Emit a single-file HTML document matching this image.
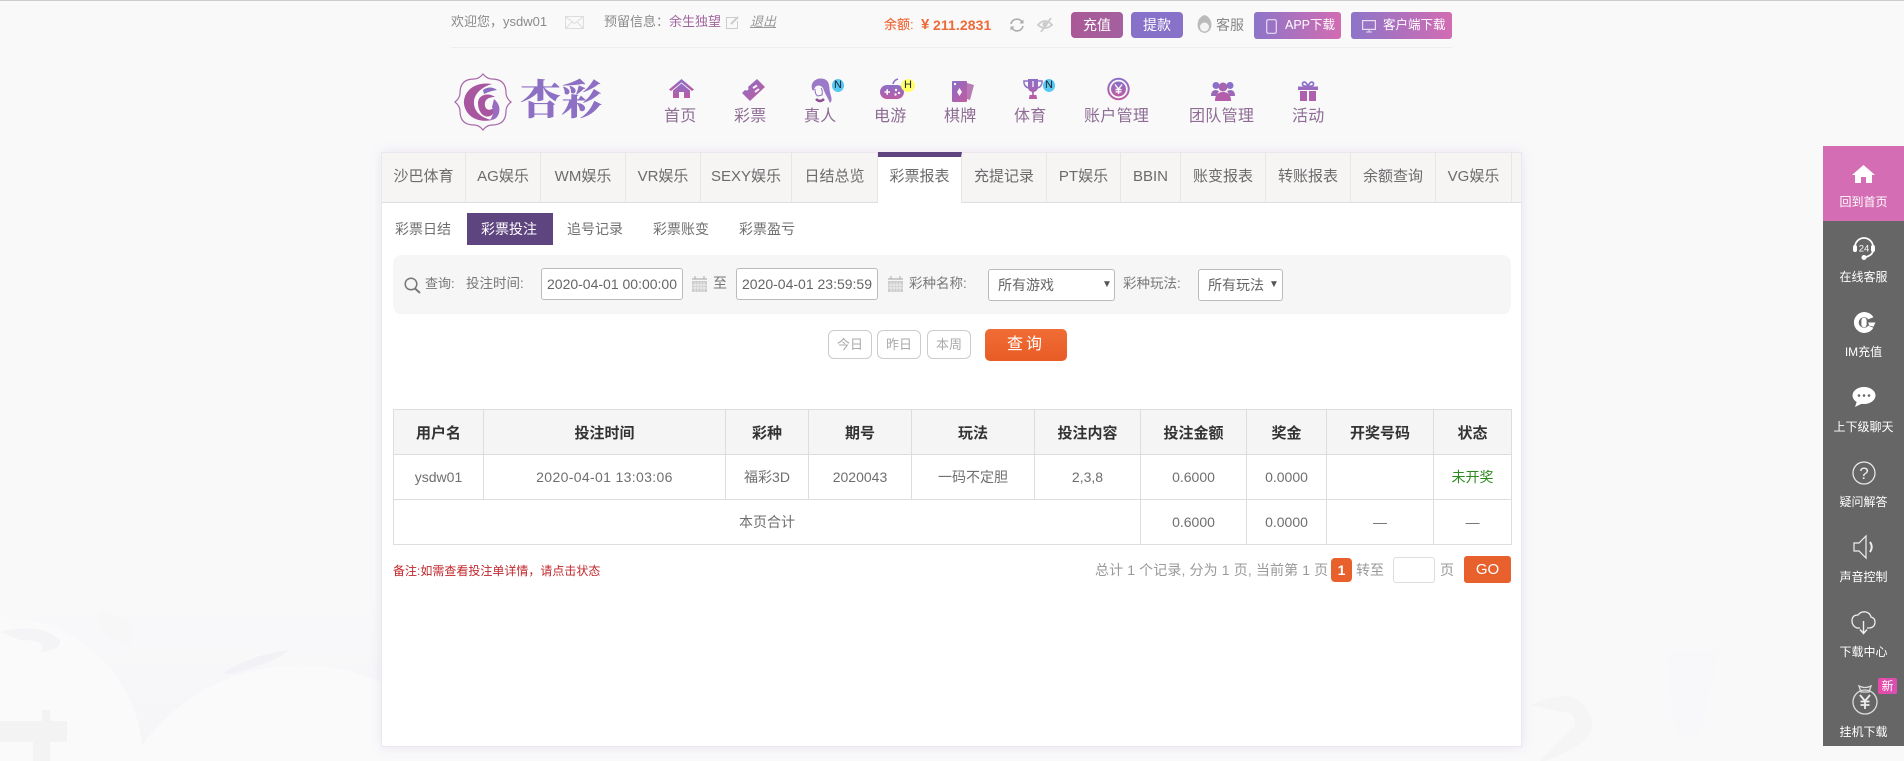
<!DOCTYPE html>
<html lang="zh-CN"><head><meta charset="utf-8"><title>彩票投注</title>
<style>
*{box-sizing:border-box}
html,body{margin:0;padding:0;width:1904px;height:761px;overflow:hidden;background:#f9f9fa}
body{position:relative;font-family:"Liberation Sans","Noto Sans CJK SC",sans-serif;color:#666}
.t{position:absolute;white-space:nowrap;line-height:20px;font-size:13px}
.a{position:absolute}
svg{position:absolute;overflow:visible}
.tab{position:absolute;top:152px;height:50px;line-height:50px;font-size:15px;text-align:center;color:#6b6b6b;border-right:1px solid #e9e5e5;white-space:nowrap}
.sub{position:absolute;top:219px;font-size:14px;line-height:20px;color:#6f6f6f;white-space:nowrap}
.nav{position:absolute;top:106px;font-size:16px;line-height:22px;color:#8e6c94;white-space:nowrap;letter-spacing:.3px}
.inp{position:absolute;top:268px;height:32px;width:142px;background:#fff;border:1px solid #bbb;border-radius:3px;font-size:14px;line-height:30px;padding-left:5px;color:#666;white-space:nowrap}
.dbtn{position:absolute;top:330px;height:29px;width:44px;border:1px solid #ccc;border-radius:6px;background:#fff;color:#aaa;font-size:13px;line-height:27px;text-align:center}
table{position:absolute;left:393px;top:409px;width:1118px;border-collapse:collapse;table-layout:fixed}
td,th{border:1px solid #ddd;height:45px;padding:0;text-align:center;font-size:14px;color:#6f6f6f;font-weight:400}
th{background:#f5f5f5;color:#333;font-weight:700;font-size:15px}
.side{position:absolute;left:1823px;width:81px;height:75px;background:#666}
.side span{position:absolute;left:0;width:81px;text-align:center;color:#fff;font-size:12px;line-height:18px;white-space:nowrap}
.badge{position:absolute;border-radius:50%;font-size:11px;line-height:13px;text-align:center;color:#223}
.hbtn{position:absolute;top:12px;color:#fff;text-align:center;border-radius:4px;font-size:14px;line-height:26px}
.dl{position:absolute;top:12px;height:27px;border-radius:3px;background:linear-gradient(90deg,#8d75c8,#d26cb2);color:#fff;font-size:12.500px;line-height:27px;white-space:nowrap}
</style></head><body>
<svg width="0" height="0" style="left:0;top:0"><defs>
<linearGradient id="g" x1="0" y1="0" x2="0" y2="1"><stop offset="0" stop-color="#8a70c8"/><stop offset="1" stop-color="#bd5ba2"/></linearGradient>
<linearGradient id="l" x1="0" y1="0" x2="1" y2="1"><stop offset="0" stop-color="#8a6dc6"/><stop offset="1" stop-color="#c35c9f"/></linearGradient>
<linearGradient id="bgf" x1="0" y1="0" x2="0" y2="1"><stop offset="0" stop-color="#f9f9fa"/><stop offset="1" stop-color="#f5f5f8"/></linearGradient>
</defs></svg>

<!-- background watermarks -->
<svg width="1904" height="761" style="left:0;top:0;overflow:hidden">
<rect x="0" y="600" width="380" height="161" fill="url(#bgf)"/>
<path d="M0 617A143 143 0 0 1 143 761L0 761Z" fill="#fafafb"/>
<path d="M132 761A195 195 0 0 1 380 682L380 761Z" fill="#fafafb"/>
<path d="M0 632 Q40 622 60 640 Q62 650 40 652 Q50 640 20 640 Z" fill="#f4f4f7"/>
<path d="M225 672 Q250 655 290 650 Q270 665 225 675 Z" fill="#f2f2f6"/>
<path d="M100 610 Q95 640 130 645 Q140 630 125 620 Z" fill="#f7f7f8"/>
<path d="M0 721H42V710H50V721H67V742H50V761H33V742H0Z" fill="#f3f3f4"/>
<path d="M1530 705Q1565 690 1578 700Q1610 730 1570 750Q1555 758 1545 761L1540 761L1575 725Q1575 710 1560 712Z" fill="#f5f5f6"/>
<path d="M1665 650H1720L1700 735H1675Z" fill="#f8f8fa"/>
</svg>
<div class="a" style="left:0;top:0;width:1904px;height:1px;background:#ccc"></div>

<!-- top bar -->
<div class="t" style="left:451px;top:12px;color:#8a8a8a">欢迎您，ysdw01</div>
<svg style="left:565px;top:16px" width="19" height="13"><rect x=".5" y=".5" width="18" height="12" fill="none" stroke="#ddd"/><path d="M1 1l8.500 6.500L18 1M1 12l6-6M18 12l-6-6" fill="none" stroke="#ddd"/></svg>
<div class="t" style="left:604px;top:12px;color:#8a8a8a">预留信息：</div>
<div class="t" style="left:669px;top:12px;color:#a2669f">余生独望</div>
<svg style="left:726px;top:16px" width="13" height="13"><path d="M10 1.500H.5V12.500H11.500V5" fill="none" stroke="#ccc"/><path d="M5 8L12 1" stroke="#ccc" stroke-width="2"/></svg>
<div class="t" style="left:750px;top:12px;color:#999;font-style:italic;text-decoration:underline">退出</div>
<div class="t" style="left:884px;top:15px;color:#ee6d3b;font-size:13px;font-weight:500">余额:</div>
<div class="t" style="left:921px;top:15px;color:#ee6a38;font-size:15px;font-weight:700">¥</div>
<div class="t" style="left:933px;top:15px;color:#ee6a38;font-size:14px;font-weight:700;letter-spacing:.1px">211.2831</div>
<svg style="left:1009px;top:18px" width="16" height="14" viewBox="0 0 16 14"><path d="M2 6A6 6 0 0 1 13 4M14 8A6 6 0 0 1 3 10" fill="none" stroke="#aaa" stroke-width="1.600"/><path d="M14.500 1.500V5.500H10.500zM1.500 12.500V8.500H5.500z" fill="#aaa"/></svg>
<svg style="left:1037px;top:18px" width="17" height="14" viewBox="0 0 17 14"><path d="M1 7Q8 -1 15 7Q8 13 1 7Z" fill="none" stroke="#ccc" stroke-width="1.800"/><circle cx="8" cy="6.500" r="2.500" fill="#ccc"/><path d="M14 0L4 14" stroke="#ccc" stroke-width="1.800"/></svg>
<div class="hbtn" style="left:1071px;width:52px;background:linear-gradient(90deg,#a95a96,#a4609f)">充值</div>
<div class="hbtn" style="left:1131px;width:52px;background:#8871c9">提款</div>
<svg style="left:1197px;top:15px" width="15" height="18" viewBox="0 0 15 18"><path d="M7.500 0Q14 2 14.500 10Q14 17 7.500 18Q1 17 .5 10Q1 2 7.500 0Z" fill="#bbb"/><circle cx="7.500" cy="12" r="4.500" fill="#f4f4f4"/></svg>
<div class="t" style="left:1216px;top:15px;color:#888;font-size:14px">客服</div>
<div class="dl" style="left:1254px;width:87px"><span style="position:absolute;left:31px">APP下载</span></div>
<svg style="left:1266px;top:19px" width="11" height="15"><rect x=".7" y=".7" width="9.600" height="13.600" rx="1.500" fill="none" stroke="#e8dcf3" stroke-width="1.200"/></svg>
<div class="dl" style="left:1351px;width:101px"><span style="position:absolute;left:32px">客户端下载</span></div>
<svg style="left:1362px;top:20px" width="14" height="13"><rect x=".6" y=".6" width="12.800" height="8.800" fill="none" stroke="#e8dcf3" stroke-width="1.200"/><path d="M4 12H10M7 10V12" stroke="#e8dcf3"/></svg>
<div class="a" style="left:451px;top:47px;width:1001px;height:1px;background:#eee"></div>

<!-- logo -->
<svg style="left:454px;top:73px" width="58" height="58" viewBox="0 0 58 58">
<path d="M29 1Q33 6 38 6Q52 6 52 20Q52 25 57 29Q52 33 52 38Q52 52 38 52Q33 52 29 57Q25 52 20 52Q6 52 6 38Q6 33 1 29Q6 25 6 20Q6 6 20 6Q25 6 29 1Z" fill="none" stroke="#a868a8" stroke-width="1.200"/>
<path d="M38 11C20 8 9 19 10 31C12 44 24 50 38 47C27 45 19 38 20 28C21 20 28 14 38 11Z" fill="#a8569f"/>
<path d="M29 17Q36 12 43 17Q36 18 30 21Z" fill="#8a6cc0"/>
<path d="M24 30C24 22 34 19 41 24C34 24 30 27 31 33C32 38 38 38 41 33C42 42 34 46 29 42C26 40 24 35 24 30Z" fill="#a8569f"/>
<path d="M40 26Q47 32 45 40Q43 47 36 47Q41 40 38 34Z" fill="#9a6cc0"/>
</svg>
<div class="t" style="left:520px;top:80px;font-size:41px;line-height:40px;font-family:'Liberation Serif','Noto Serif CJK SC',serif;font-weight:900;color:#8d70c4">杏彩</div>

<!-- nav -->
<svg style="left:669px;top:79px" width="25" height="19" viewBox="0 0 25 19"><path d="M12.500 0L25 10.500L23 12L12.500 3.500L2 12L0 10.500Z" fill="url(#g)"/><path d="M4 11.500L12.500 4.500L21 11.500V19H15V13H10V19H4Z" fill="url(#g)"/></svg>
<div class="nav" style="left:664px">首页</div>
<svg style="left:742px;top:79px" width="23" height="22" viewBox="0 0 23 22"><path d="M15 0L23 8L8 22L0 14L3 11Q5 12 6 11Q7 9 6 8Z" fill="url(#l)"/><path d="M11 9L15 6.500M13 13L17 10" stroke="#f9f9fa" stroke-width="2"/></svg>
<div class="nav" style="left:734px">彩票</div>
<svg style="left:809px;top:78px" width="24" height="26" viewBox="0 0 24 26"><path d="M3 11C1 3 9 -1 15 1C21 3 20 9 21 14C22 19 24 22 21 25C19 20 16 16 14 10C11 6 6 7 5 12C4 13 3 12 3 11Z" fill="#9a7ac8"/><path d="M6 11Q6 17 9 18L13 17Q14 13 12 10" fill="none" stroke="#8a6cb8"/><path d="M7 21Q11 25 15 21" stroke="#8a4d90" stroke-width="2.500" fill="none"/></svg>
<div class="badge" style="left:832px;top:79px;width:12px;height:13px;background:#55c8f2">N</div>
<div class="nav" style="left:804px">真人</div>
<svg style="left:880px;top:78px" width="24" height="22" viewBox="0 0 24 22"><path d="M13 6Q14 2 18 1" stroke="#8a70c8" stroke-width="1.500" fill="none"/><rect x="0" y="7" width="24" height="14" rx="7" fill="url(#g)"/><path d="M4.500 14H10M7.200 11.200V16.800" stroke="#f9f9fa" stroke-width="1.600"/><circle cx="16" cy="12" r="1.200" fill="#f9f9fa"/><circle cx="19" cy="15" r="1.200" fill="#f9f9fa"/><circle cx="15.500" cy="16.500" r="1.200" fill="#f9f9fa"/></svg>
<div class="badge" style="left:901px;top:79px;width:14px;height:13px;background:#ffff66">H</div>
<div class="nav" style="left:874px">电游</div>
<svg style="left:952px;top:81px" width="22" height="21" viewBox="0 0 22 21"><path d="M15 2L22 4L18 19L15 18Z" fill="#b77cb5"/><rect x="0" y="0" width="15" height="21" rx="1" fill="url(#l)"/><path d="M7.500 7L10 11L7.500 15L5 11Z" fill="#f9f9fa"/><circle cx="3" cy="3" r="1.200" fill="#f9f9fa"/></svg>
<div class="nav" style="left:944px">棋牌</div>
<svg style="left:1023px;top:79px" width="20" height="20" viewBox="0 0 24 20" preserveAspectRatio="none"><path d="M6 0H18V8Q18 12 13 13V16H16L17 20H7L8 16H11V13Q6 12 6 8Z" fill="url(#g)"/><path d="M6 2H1Q1 8 7 9M18 2H23Q23 8 17 9" fill="none" stroke="#8a70c8" stroke-width="1.600"/><path d="M12 2V8" stroke="#f9f9fa" stroke-width="1.500"/></svg>
<div class="badge" style="left:1043px;top:79px;width:12px;height:13px;background:#55c8f2">N</div>
<div class="nav" style="left:1014px">体育</div>
<svg style="left:1107px;top:78px" width="23" height="22" viewBox="0 0 23 22"><circle cx="11.500" cy="11" r="10.200" fill="none" stroke="url(#g)" stroke-width="2"/><circle cx="11.500" cy="11" r="7.500" fill="url(#g)"/><path d="M8 6.500L11.500 11L15 6.500M11.500 11V16M8.500 11.500H14.500M8.500 13.800H14.500" fill="none" stroke="#f9f9fa" stroke-width="1.400"/></svg>
<div class="nav" style="left:1084px">账户管理</div>
<svg style="left:1211px;top:81px" width="24" height="20" viewBox="0 0 24 20"><circle cx="5" cy="4.500" r="3.500" fill="#8a70c8"/><circle cx="19" cy="4.500" r="3.500" fill="#8a70c8"/><path d="M0 15Q0 9 5 9L8 10L5 15ZM24 15Q24 9 19 9L16 10L19 15Z" fill="#9b68b8"/><circle cx="12" cy="6" r="4.500" fill="#a565b0"/><path d="M4 20Q4 11 12 11Q20 11 20 20Z" fill="#b35dab"/></svg>
<div class="nav" style="left:1189px">团队管理</div>
<svg style="left:1298px;top:81px" width="20" height="20" viewBox="0 0 20 20"><path d="M10 5Q4 6 4.500 2Q7 -1 10 5Q13 -1 15.500 2Q16 6 10 5" fill="none" stroke="#8a70c8" stroke-width="1.600"/><rect x="0" y="5.500" width="20" height="3.500" fill="#9a6bc0"/><rect x="2" y="10" width="7" height="10" fill="#ae5fad"/><rect x="11" y="10" width="7" height="10" fill="#ae5fad"/></svg>
<div class="nav" style="left:1292px">活动</div>

<!-- main container -->
<div class="a" style="left:381px;top:152px;width:1141px;height:595px;background:#fff;border:1px solid #ece6ef;box-shadow:0 0 12px rgba(150,110,180,.14)"></div>
<div class="a" style="left:382px;top:153px;width:1139px;height:50px;background:#f7f4f4;border-bottom:1px solid #ddd"></div>
<div class="tab" style="left:382px;width:84px">沙巴体育</div>
<div class="tab" style="left:466px;width:75px">AG娱乐</div>
<div class="tab" style="left:541px;width:85px">WM娱乐</div>
<div class="tab" style="left:626px;width:75px">VR娱乐</div>
<div class="tab" style="left:701px;width:91px">SEXY娱乐</div>
<div class="tab" style="left:792px;width:86px">日结总览</div>
<div class="tab" style="left:878px;width:84px;background:#fff;height:51px;line-height:40px;border-top:5px solid #5f4580;border-right:1px solid #e9e5e5">彩票报表</div>
<div class="tab" style="left:962px;width:85px">充提记录</div>
<div class="tab" style="left:1047px;width:74px">PT娱乐</div>
<div class="tab" style="left:1121px;width:60px">BBIN</div>
<div class="tab" style="left:1181px;width:85px">账变报表</div>
<div class="tab" style="left:1266px;width:85px">转账报表</div>
<div class="tab" style="left:1351px;width:85px">余额查询</div>
<div class="tab" style="left:1436px;width:76px">VG娱乐</div>

<!-- sub tabs -->
<div class="a" style="left:467px;top:213px;width:86px;height:32px;background:#5f4580"></div>
<div class="sub" style="left:395px">彩票日结</div>
<div class="sub" style="left:481px;color:#fff">彩票投注</div>
<div class="sub" style="left:567px">追号记录</div>
<div class="sub" style="left:653px">彩票账变</div>
<div class="sub" style="left:739px">彩票盈亏</div>

<!-- query bar -->
<div class="a" style="left:393px;top:255px;width:1118px;height:59px;background:#f6f6f7;border-radius:8px"></div>
<svg style="left:404px;top:277px" width="17" height="17"><circle cx="7" cy="7" r="5.800" fill="none" stroke="#777" stroke-width="1.500"/><path d="M11 11.500L16 16" stroke="#777" stroke-width="2"/></svg>
<div class="t" style="left:425px;top:274px;color:#777">查询:</div>
<div class="t" style="left:466px;top:274px;color:#777;font-size:13.500px">投注时间:</div>
<div class="inp" style="left:541px">2020-04-01 00:00:00</div>
<svg style="left:692px;top:276px" width="15" height="16"><rect y="2" width="15" height="14" fill="#ccc"/><rect x="0" y="4" width="15" height="1" fill="#f6f6f7"/><path d="M3 6V16M6 6V16M9 6V16M12 6V16M0 9H15M0 12H15" stroke="#f6f6f7" stroke-width=".7"/><path d="M3 0V3M12 0V3" stroke="#aaa"/></svg>
<div class="t" style="left:713px;top:273px;font-size:14px;color:#777">至</div>
<div class="inp" style="left:736px">2020-04-01 23:59:59</div>
<svg style="left:888px;top:276px" width="15" height="16"><rect y="2" width="15" height="14" fill="#ccc"/><rect x="0" y="4" width="15" height="1" fill="#f6f6f7"/><path d="M3 6V16M6 6V16M9 6V16M12 6V16M0 9H15M0 12H15" stroke="#f6f6f7" stroke-width=".7"/><path d="M3 0V3M12 0V3" stroke="#aaa"/></svg>
<div class="t" style="left:909px;top:274px;color:#777;font-size:13.500px">彩种名称:</div>
<div class="inp" style="left:988px;top:269px;width:127px;padding-left:9px">所有游戏<span style="position:absolute;left:113px;top:0;font-size:10px;color:#555">▼</span></div>
<div class="t" style="left:1123px;top:274px;color:#777;font-size:13.500px">彩种玩法:</div>
<div class="inp" style="left:1198px;top:269px;width:85px;padding-left:9px">所有玩法<span style="position:absolute;left:70px;top:0;font-size:10px;color:#555">▼</span></div>

<!-- date buttons -->
<div class="dbtn" style="left:828px">今日</div>
<div class="dbtn" style="left:877px">昨日</div>
<div class="dbtn" style="left:927px">本周</div>
<div class="a" style="left:985px;top:329px;width:82px;height:32px;border-radius:5px;background:linear-gradient(#f06d35,#e85c26);color:#fff;font-size:16px;line-height:32px;text-align:center;letter-spacing:3px">查询</div>

<!-- table -->
<table>
<colgroup><col style="width:90px"><col style="width:242px"><col style="width:83px"><col style="width:103px"><col style="width:123px"><col style="width:106px"><col style="width:106px"><col style="width:80px"><col style="width:107px"><col style="width:78px"></colgroup>
<tr><th>用户名</th><th>投注时间</th><th>彩种</th><th>期号</th><th>玩法</th><th>投注内容</th><th>投注金额</th><th>奖金</th><th>开奖号码</th><th>状态</th></tr>
<tr><td>ysdw01</td><td style="letter-spacing:.35px">2020-04-01 13:03:06</td><td>福彩3D</td><td>2020043</td><td>一码不定胆</td><td>2,3,8</td><td>0.6000</td><td>0.0000</td><td></td><td style="color:#2b8a1e">未开奖</td></tr>
<tr><td colspan="6">本页合计</td><td>0.6000</td><td>0.0000</td><td>—</td><td>—</td></tr>
</table>

<!-- footer -->
<div class="t" style="left:393px;top:561px;font-size:12px;color:#c1272d">备注:如需查看投注单详情，请点击状态</div>
<div class="t" style="left:1095px;top:560px;font-size:14px;color:#999;letter-spacing:.12px">总计 1 个记录, 分为 1 页, 当前第 1 页</div>
<div class="a" style="left:1331px;top:558px;width:21px;height:24px;background:#e8602c;border-radius:4px;color:#fff;font-weight:700;font-size:14px;line-height:24px;text-align:center">1</div>
<div class="t" style="left:1356px;top:560px;font-size:14px;color:#999">转至</div>
<div class="a" style="left:1393px;top:557px;width:42px;height:26px;border:1px solid #ddd;border-radius:3px;background:#fff"></div>
<div class="t" style="left:1440px;top:560px;font-size:14px;color:#999">页</div>
<div class="a" style="left:1464px;top:556px;width:47px;height:27px;background:#e8602c;border-radius:3px;color:#fff;font-size:15px;line-height:27px;text-align:center">GO</div>

<!-- sidebar -->
<div class="side" style="top:146px;background:#d46db4"><span style="top:47px">回到首页</span>
<svg style="left:29px;top:19px" width="23" height="18" viewBox="0 0 23 18"><path d="M11.500 0L23 10H20V18H14V12H9V18H3V10H0Z" fill="#fff"/></svg></div>
<div class="side" style="top:221px"><span style="top:47px">在线客服</span>
<svg style="left:29px;top:15px" width="24" height="25" viewBox="0 0 24 25"><path d="M3 11A9 9 0 0 1 21 11V14Q21 19 14 21" fill="none" stroke="#fff" stroke-width="1.700"/><rect x="1" y="9" width="4" height="7" rx="2" fill="#fff"/><rect x="19" y="9" width="4" height="7" rx="2" fill="#fff"/><circle cx="12" cy="21.500" r="2.500" fill="#fff"/><text x="12" y="15.500" font-size="9.500" fill="#fff" text-anchor="middle" font-family="Liberation Sans">24</text></svg></div>
<div class="side" style="top:296px"><span style="top:47px">IM充值</span>
<svg style="left:29px;top:15px" width="24" height="23" viewBox="0 0 22 22"><path d="M20 6A10 10 0 1 0 20 16L15 14A5 5 0 1 1 15 8Z" fill="#fff"/><rect x="8.500" y="6.500" width="5" height="9" rx="2.500" fill="#fff"/><path d="M15 11H22L20 15L16 14Z" fill="#fff"/></svg></div>
<div class="side" style="top:371px"><span style="top:47px">上下级聊天</span>
<svg style="left:29px;top:16px" width="24" height="20" viewBox="0 0 24 20"><ellipse cx="12" cy="8.500" rx="11.500" ry="8.500" fill="#fff"/><path d="M5 14L3 20L11 16Z" fill="#fff"/><circle cx="7" cy="8.500" r="1.300" fill="#666"/><circle cx="12" cy="8.500" r="1.300" fill="#666"/><circle cx="17" cy="8.500" r="1.300" fill="#666"/></svg></div>
<div class="side" style="top:446px"><span style="top:47px">疑问解答</span>
<svg style="left:29px;top:15px" width="24" height="24" viewBox="0 0 24 24"><circle cx="12" cy="12" r="11" fill="none" stroke="#eee" stroke-width="1.200"/><text x="12" y="18" font-size="17" fill="#eee" text-anchor="middle" font-family="Liberation Sans">?</text></svg></div>
<div class="side" style="top:521px"><span style="top:47px">声音控制</span>
<svg style="left:30px;top:14px" width="22" height="24" viewBox="0 0 22 24"><path d="M1 8H6L13 1V23L6 16H1Z" fill="none" stroke="#eee" stroke-width="1.200"/><path d="M17 7Q20.500 12 17 17" fill="none" stroke="#eee" stroke-width="2"/></svg></div>
<div class="side" style="top:596px"><span style="top:47px">下载中心</span>
<svg style="left:28px;top:15px" width="25" height="24" viewBox="0 0 25 24"><path d="M9 17H6Q1 15 1 10Q1 4 7 4Q10 0 15 1Q19 2 20 6Q24 7 24 11Q24 16 19 17H16" fill="none" stroke="#eee" stroke-width="1.300"/><path d="M12.500 10V22M9 18.500L12.500 22.500L16 18.500" fill="none" stroke="#eee" stroke-width="1.400"/></svg></div>
<div class="side" style="top:671px"><span style="top:52px">挂机下载</span>
<svg style="left:28px;top:14px" width="28" height="30" viewBox="0 0 28 30"><path d="M8 1Q14 4 20 1L18 7H10Z" fill="none" stroke="#ddd" stroke-width="1.300"/><circle cx="14" cy="17" r="12" fill="none" stroke="#ddd" stroke-width="1.300"/><path d="M9 10L14 16L19 10M14 16V24M9.500 16.500H18.500M9.500 20H18.500" fill="none" stroke="#eee" stroke-width="1.800"/></svg>
<div style="position:absolute;left:55px;top:7px;width:19px;height:16px;background:linear-gradient(90deg,#e84aa8,#d850b0);border-radius:2px;color:#fff;font-size:12px;line-height:16px;text-align:center">新</div></div>
</body></html>
